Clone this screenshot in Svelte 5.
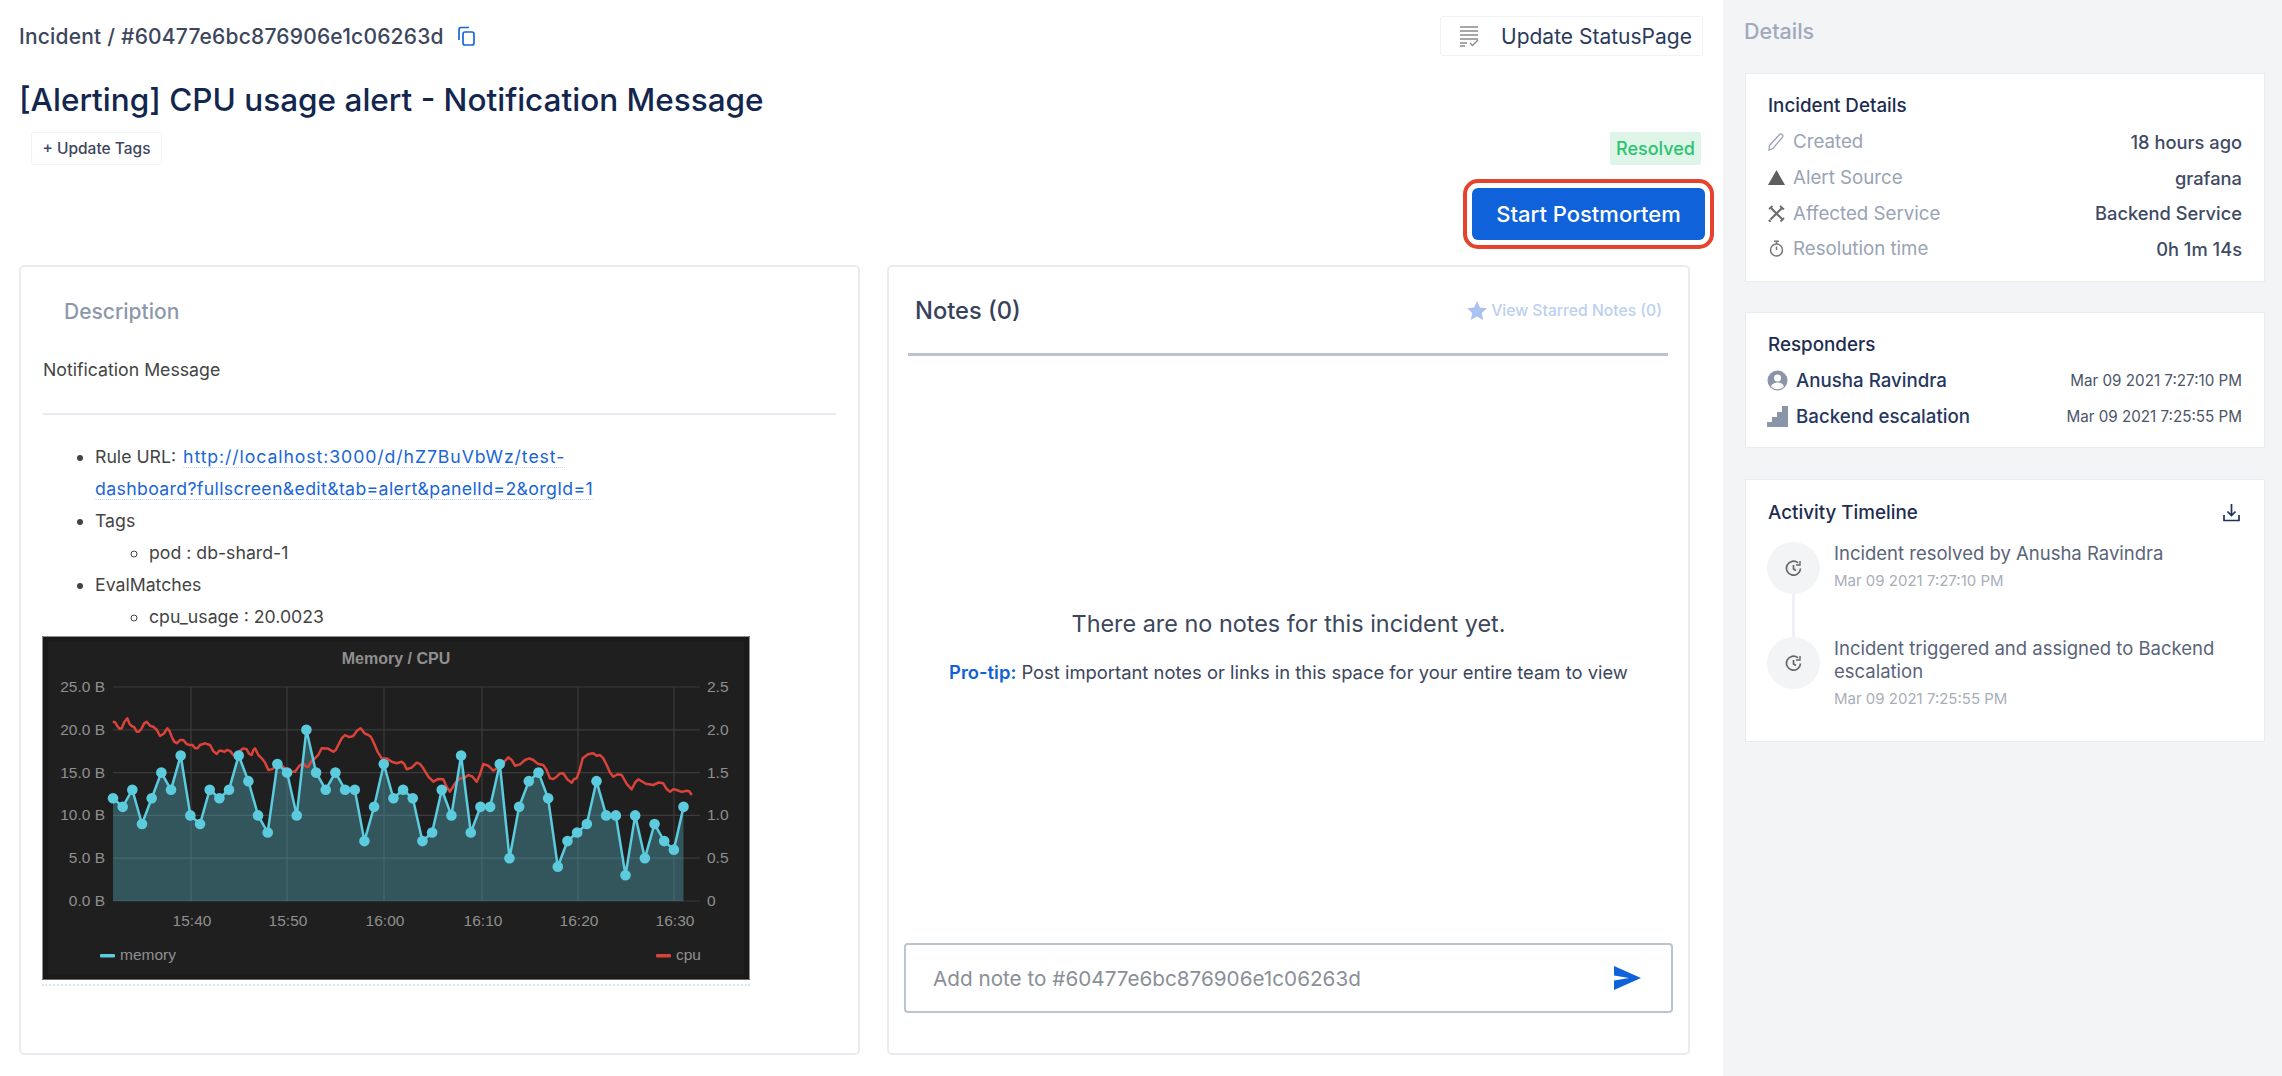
<script>
  const memory = [12,11,13,9,12,15,13,17,10,9,13,12,13,17,14,10,8,16,15,10,20,15,13,15,13,13,7,11,16,12,13,12,7,8,13,10,17,8,11,11,16,5,11,14,15,12,4,7,8,9,14,10,10,3,10,5,9,7,6,11]
  const y0 = 901
  const yStep = 8.56
  const pts = memory.map((v, i) => [113 + i * 9.67, y0 - v * yStep])
  const line = pts.map(p => p[0].toFixed(1) + ',' + p[1].toFixed(1)).join(' ')
  const area = `113,${y0} ${line} ${pts[59][0].toFixed(1)},${y0}`

  // red series read off the screenshot, in page pixels
  const cpuLeft = [[248,275],[262,288],[275,295],[292,265],[305,288],[320,305],[335,295],[350,275],[370,290],[390,318],[412,295],[425,320],[440,340],[460,330],[480,345],[495,355],[510,345],[540,345],[560,372],[575,362],[590,360],[610,375],[630,362],[650,358],[665,375],[675,355],[695,385],[715,420],[740,405],[765,415],[795,425],[820,400],[835,410],[855,385],[875,355],[910,365],[925,345],[945,315],[970,318],[992,295],[1015,315],[1030,335],[1055,385],[1085,395],[1115,395]]
  const cpuRight = [[20,418],[50,398],[70,415],[100,455],[130,448],[150,485],[180,445],[205,435],[230,455],[250,402],[280,422],[325,382],[345,407],[375,390],[400,390],[430,405],[450,445],[470,440],[490,430],[515,458],[530,445],[548,385],[580,370],[600,375],[620,405],[640,440],[665,435],[695,478],[715,448],[760,465],[790,460],[810,485],[830,480],[860,482],[875,495]]
  const cpuBase = [
    ...cpuLeft.map(p => [30 + p[0] / 3, 630 + p[1] / 3]),
    ...cpuRight.map(p => [400 + p[0] / 3, 630 + p[1] / 3])
  ]
  // small wobble between the read points, the real series is noisy
  const cpu = cpuBase.flatMap((p, i) => {
    const n = cpuBase[i + 1]
    if (!n) return [p]
    return [p, [(p[0] + n[0]) / 2, (p[1] + n[1]) / 2 + (i % 2 ? 1.6 : -1.6)]]
  }).map(p => p[0].toFixed(1) + ',' + p[1].toFixed(1)).join(' ')

  const leftAxis = ['25.0 B','20.0 B','15.0 B','10.0 B','5.0 B','0.0 B']
  const rightAxis = ['2.5','2.0','1.5','1.0','0.5','0']
  const ticks = [[191,'15:40'],[287,'15:50'],[384,'16:00'],[482,'16:10'],[578,'16:20'],[674,'16:30']]
  const hash = '#60477e6bc876906e1c06263d'
</script>

<div class="page">
  <main>
    <div class="topbar">
      <div class="crumb">
        <span>Incident / {hash}</span>
        <svg width="20" height="20" viewBox="0 0 20 20" fill="none" stroke="#1a66d6" stroke-width="1.7">
          <rect x="7" y="6" width="11" height="13" rx="2" />
          <path d="M3 14V3.5A2 2 0 0 1 5 1.500h8" />
        </svg>
      </div>
      <button class="status-btn">
        <svg width="19" height="21" viewBox="0 0 19 21" fill="none" stroke="#8b8b8b" stroke-width="1.7">
          <path d="M0 1h18M0 5h18M0 9h18M0 13h18M0 17h7M0 20h5" />
          <path d="M10 17l2.500 2.500L18 14" stroke-width="1.300" />
        </svg>
        Update StatusPage
      </button>
    </div>

    <h1>[Alerting] CPU usage alert - Notification Message</h1>

    <div class="tagrow">
      <button class="tags-btn">+ Update Tags</button>
      <span class="resolved">Resolved</span>
    </div>

    <div class="actionrow">
      <button class="postmortem">Start Postmortem</button>
    </div>

    <div class="columns">
      <section class="card desc">
        <h3>Description</h3>
        <p class="msg">Notification Message</p>
        <hr />
        <ul>
          <li>Rule URL: <a href="#rule">http://localhost:3000/d/hZ7BuVbWz/test-<span class="nb">dashboard?fullscreen&amp;edit&amp;tab=alert&amp;panelId=2&amp;orgId=1</span></a></li>
          <li>Tags
            <ul><li>pod : db-shard-1</li></ul>
          </li>
          <li>EvalMatches
            <ul><li>cpu_usage : 20.0023</li></ul>
          </li>
        </ul>
        <svg class="chart" width="708" height="344" viewBox="42 636 708 344">
          <rect x="42" y="636" width="708" height="344" fill="#191919" />
          <rect x="48" y="642" width="696" height="332" fill="#1f1f20" />
          <path d="M42.500 980V636.500H749.500V980" fill="none" stroke="#8e8e8e" />
          <path d="M42 979.500H750" stroke="#6a6a6a" />
          <text class="ctitle" x="396" y="664" text-anchor="middle">Memory / CPU</text>
          {#each leftAxis as label, i}
            <path d="M113 {687 + i * 42.8}H700" stroke="#3b3b3b" stroke-width="1.200" />
            <text class="axis" x="105" y={692 + i * 42.8} text-anchor="end">{label}</text>
            <text class="axis" x="707" y={692 + i * 42.8}>{rightAxis[i]}</text>
          {/each}
          {#each ticks as t}
            <path d="M{t[0]} 687V901" stroke="#3b3b3b" stroke-width="1.200" />
            <text class="axis" x={t[0] + 1} y="926" text-anchor="middle">{t[1]}</text>
          {/each}
          <polygon points={area} fill="#5bcbdd" fill-opacity="0.32" />
          <polyline points={cpu} fill="none" stroke="#d9433a" stroke-width="2.500" stroke-linejoin="round" />
          <polyline points={line} fill="none" stroke="#5bcbdd" stroke-width="2.500" />
          {#each pts as p}
            <circle cx={p[0]} cy={p[1]} r="5.300" fill="#5bcbdd" />
          {/each}
          <rect x="100" y="954" width="15" height="3.500" rx="1" fill="#5bcbdd" />
          <text class="axis" x="120" y="960">memory</text>
          <rect x="656" y="954" width="15" height="3.500" rx="1" fill="#d9433a" />
          <text class="axis" x="676" y="960">cpu</text>
        </svg>
        <div class="imgline"></div>
      </section>

      <section class="card notes">
        <div class="noteshead">
          <h2>Notes (0)</h2>
          <span class="starred">
            <svg width="20" height="19" viewBox="0 0 24 23"><path d="M12 0l3.600 7.800 8.400 1-6.200 5.800 1.700 8.400-7.500-4.200L4.500 23l1.700-8.400L0 8.800l8.400-1z" fill="#a9c3ee" /></svg>
            View Starred Notes (0)
          </span>
        </div>
        <div class="empty">
          <p class="big">There are no notes for this incident yet.</p>
          <p class="tip"><b>Pro-tip:</b> Post important notes or links in this space for your entire team to view</p>
        </div>
        <div class="noteinput">
          <input placeholder="Add note to {hash}" />
          <svg width="27" height="24" viewBox="0 0 27 24"><path d="M0 0l27 12L0 24v-9.500L15 12 0 9.500z" fill="#0f62d9" /></svg>
        </div>
      </section>
    </div>
  </main>

  <aside>
    <div class="detailshead">Details</div>

    <section class="box info">
      <h4>Incident Details</h4>
      <div class="row">
        <span class="lab">
          <svg width="17" height="18" viewBox="0 0 17 18" fill="none" stroke="#99a3b5" stroke-width="1.300"><path d="M1.500 12.500L11.500 1.500a2 2 0 0 1 3 2.600L5 15.500 1 17z" /></svg>
          Created
        </span>
        <span class="val">18 hours ago</span>
      </div>
      <div class="row">
        <span class="lab">
          <svg width="17" height="15" viewBox="0 0 17 15"><path d="M8.500 0L17 15H0z" fill="#5e5e5e" /></svg>
          Alert Source
        </span>
        <span class="val">grafana</span>
      </div>
      <div class="row">
        <span class="lab">
          <svg width="17" height="17" viewBox="0 0 17 17" fill="none" stroke="#6d6d6d" stroke-width="2.200"><path d="M2.500 14.500L14 3M3 3l11.500 11.500" /><path d="M12 1l4 3.500M1 4l3.500-3M.8 15l2 2M12.500 16.500l3.500-3.500" stroke-width="1.800" /></svg>
          Affected Service
        </span>
        <span class="val">Backend Service</span>
      </div>
      <div class="row">
        <span class="lab">
          <svg width="17" height="17" viewBox="0 0 17 17" fill="none" stroke="#777" stroke-width="1.500"><circle cx="8.500" cy="10" r="6" /><path d="M6 1.200h5M8.500 1.500v2.500M8.500 10V6.500" /></svg>
          Resolution time
        </span>
        <span class="val">0h 1m 14s</span>
      </div>
    </section>

    <section class="box responders">
      <h4>Responders</h4>
      <div class="row">
        <span class="who">
          <svg width="21" height="21" viewBox="0 0 21 21">
            <circle cx="10.500" cy="10.500" r="10" fill="#8b95a8" />
            <circle cx="10.500" cy="8" r="3.500" fill="#fff" />
            <path d="M4 16.500c1-3 4-4 6.500-4s5.500 1 6.500 4a9 9 0 0 1-13 0z" fill="#fff" />
          </svg>
          Anusha Ravindra
        </span>
        <span class="at">Mar 09 2021 7:27:10 PM</span>
      </div>
      <div class="row">
        <span class="who">
          <svg width="21" height="21" viewBox="0 0 21 21"><path d="M0 21v-5h5v-5h5V6h5V0h6v21z" fill="#8b95a8" /></svg>
          Backend escalation
        </span>
        <span class="at">Mar 09 2021 7:25:55 PM</span>
      </div>
    </section>

    <section class="box activity">
      <div class="acthead">
        <h4>Activity Timeline</h4>
        <svg width="17" height="18" viewBox="0 0 17 18" fill="none" stroke="#1f3158" stroke-width="1.700"><path d="M8.500 0v11M4.500 7.500l4 4 4-4M1 11v5.500h15V11" /></svg>
      </div>
      <div class="event">
        <div class="dot">
          <svg width="17" height="17" viewBox="0 0 17 17" fill="none" stroke="#666" stroke-width="1.700"><path d="M13 2.800A7 7 0 1 0 15.500 8.500M8.500 5v4l2.500 1.500" /><path d="M15 1v4h-4" stroke-width="1.400" /></svg>
        </div>
        <div class="etext">
          <div>Incident resolved by Anusha Ravindra</div>
          <small>Mar 09 2021 7:27:10 PM</small>
        </div>
      </div>
      <div class="connector"></div>
      <div class="event">
        <div class="dot">
          <svg width="17" height="17" viewBox="0 0 17 17" fill="none" stroke="#666" stroke-width="1.700"><path d="M13 2.800A7 7 0 1 0 15.500 8.500M8.500 5v4l2.500 1.500" /><path d="M15 1v4h-4" stroke-width="1.400" /></svg>
        </div>
        <div class="etext">
          <div>Incident triggered and assigned to Backend escalation</div>
          <small>Mar 09 2021 7:25:55 PM</small>
        </div>
      </div>
    </section>
  </aside>
</div>

<style>
  :global(body) {
    margin: 0;
    background: #fff;
    overflow: hidden;
  }
  .page {
    display: flex;
    width: 2282px;
    height: 1076px;
    font-family: Inter, "Liberation Sans", sans-serif;
    font-size: 15px;
    color: #444;
  }
  main {
    width: 1723px;
    box-sizing: border-box;
    padding: 16px 20px 0 19px;
  }
  .topbar {
    display: flex;
    justify-content: space-between;
    align-items: center;
    height: 40px;
  }
  .crumb {
    display: flex;
    align-items: center;
    gap: 12px;
    font-size: 21px;
    letter-spacing: 0.2px;
    font-weight: 500;
    color: #3c465c;
  }
  button {
    font-family: inherit;
    cursor: pointer;
  }
  .status-btn {
    display: flex;
    align-items: center;
    gap: 22px;
    width: 263px;
    height: 40px;
    padding: 0 0 0 19px;
    background: #fff;
    border: 1px solid #f1f2f5;
    border-radius: 3px;
    font-size: 21px;
    color: #2b3a5c;
    white-space: nowrap;
  }
  h1 {
    margin: 26px 0 0;
    height: 50px;
    line-height: 36px;
    font-size: 31.500px;
    font-weight: 500;
    color: #13264e;
    white-space: nowrap;
  }
  .tagrow {
    display: flex;
    justify-content: space-between;
    height: 33px;
    padding: 0 2px 0 12px;
  }
  .tags-btn {
    width: 131px;
    padding: 0;
    background: #fff;
    border: 1px solid #f1f2f5;
    border-radius: 3px;
    font-size: 15.500px;
    font-weight: 500;
    color: #3c465c;
  }
  .resolved {
    display: flex;
    align-items: center;
    justify-content: center;
    width: 91px;
    background: #dff5e8;
    border-radius: 2px;
    font-size: 18px;
    font-weight: 500;
    color: #2ac46f;
  }
  .actionrow {
    display: flex;
    justify-content: flex-end;
    margin: 23px -2px 0 0;
  }
  .postmortem {
    width: 233px;
    height: 52px;
    padding: 0;
    background: #0f62d9;
    border: none;
    border-radius: 6px;
    outline: 4px solid #e5432e;
    outline-offset: 5px;
    font-size: 22px;
    font-weight: 500;
    color: #fff;
  }
  .columns {
    display: grid;
    grid-template-columns: 841px 803px;
    gap: 27px;
    margin-top: 25px;
    height: 790px;
  }
  .card {
    box-sizing: border-box;
    border: 2px solid #e9ebf1;
    border-radius: 5px;
    background: #fff;
  }
  .desc {
    padding: 0 22px;
    overflow: hidden;
  }
  .desc h3 {
    margin: 33px 0 0 21px;
    line-height: 24px;
    font-size: 21px;
    font-weight: 500;
    color: #8d98ad;
  }
  .msg {
    margin: 34px 0 0;
    line-height: 24px;
    font-size: 17.700px;
    color: #444;
  }
  hr {
    margin: 31px 0 0;
    border: none;
    border-top: 2px solid #e8ecf2;
  }
  .desc ul {
    margin: 0;
    padding: 0 0 0 52px;
    line-height: 32px;
    font-size: 17.700px;
    color: #444;
  }
  .desc > ul {
    margin-top: 25.500px;
  }
  .desc ul ul {
    padding-left: 54px;
  }
  a {
    margin-left: 2px;
    color: #1a66d6;
    text-decoration: none;
    letter-spacing: 0.9px;
    border-bottom: 1px dotted #c9daf5;
  }
  .nb {
    white-space: nowrap;
    letter-spacing: 0.35px;
  }
  .chart {
    display: block;
    margin: 3px 0 0 -1px;
  }
  .chart text {
    font-family: "Liberation Sans", Arial, sans-serif;
  }
  .axis {
    font-size: 15.500px;
    fill: #8f8f8f;
  }
  .ctitle {
    font-size: 16px;
    font-weight: 700;
    fill: #8f8f8f;
  }
  .imgline {
    width: 708px;
    margin: 4px 0 0 -1px;
    border-top: 2px dotted #dbe6f8;
  }
  .notes {
    display: flex;
    flex-direction: column;
    padding: 0 15px 40px 15px;
  }
  .noteshead {
    display: flex;
    justify-content: space-between;
    align-items: center;
    height: 86px;
    margin: 0 5px 0 4px;
    padding: 0 6px 0 7px;
    border-bottom: 3px solid #bcc3d2;
  }
  .noteshead h2 {
    margin: 0;
    font-size: 23.700px;
    font-weight: 500;
    color: #37425a;
  }
  .starred {
    display: flex;
    align-items: center;
    gap: 4px;
    font-size: 15.700px;
    font-weight: 500;
    color: #bcd0f1;
  }
  .empty {
    flex: 1;
    display: flex;
    flex-direction: column;
    align-items: center;
    justify-content: center;
    gap: 24px;
    padding-bottom: 6px;
    color: #3c465c;
  }
  .empty p {
    margin: 0;
  }
  .big {
    font-size: 23.400px;
    line-height: 26px;
  }
  .tip {
    font-size: 18.400px;
    line-height: 22px;
  }
  .tip b {
    font-weight: 600;
    color: #0f62d9;
  }
  .noteinput {
    display: flex;
    align-items: center;
    height: 70px;
    box-sizing: border-box;
    padding: 0 30px 0 27px;
    border: 2px solid #bcc3d2;
    border-radius: 4px;
  }
  .noteinput input {
    flex: 1;
    border: none;
    outline: none;
    padding: 0;
    font-family: inherit;
    font-size: 20.700px;
  }
  .noteinput input::placeholder {
    color: #8a8f98;
  }
  aside {
    flex: 1;
    box-sizing: border-box;
    padding: 0 17px 0 22px;
    background: #f3f4f6;
  }
  .detailshead {
    height: 73px;
    line-height: 62px;
    font-size: 21.500px;
    font-weight: 500;
    color: #a0aabb;
    margin-left: -1px;
  }
  .box {
    box-sizing: border-box;
    padding: 0 22px;
    background: #fff;
    border: 1px solid #e9ebf1;
    margin-bottom: 30px;
  }
  .info { height: 209px; }
  .responders { height: 136px; margin-bottom: 31px; }
  .activity { height: 263px; }
  h4 {
    margin: 0;
    font-size: 18.800px;
    font-weight: 500;
    color: #1d2c50;
    line-height: 20px;
  }
  .info h4, .responders h4 {
    padding-top: 22px;
    margin-bottom: 8px;
  }
  .row {
    display: flex;
    justify-content: space-between;
    align-items: center;
    height: 35.700px;
  }
  .lab, .who {
    display: flex;
    align-items: center;
    gap: 8px;
    font-size: 18.700px;
    color: #99a3b5;
  }
  .val {
    font-size: 18.300px;
    font-weight: 500;
    color: #3f4a63;
  }
  .who {
    font-weight: 500;
    color: #25375f;
    margin-left: -1px;
  }
  .at {
    font-size: 15.200px;
    color: #4b5568;
  }
  .acthead {
    display: flex;
    justify-content: space-between;
    align-items: center;
    height: 66px;
    padding-right: 2px;
  }
  .event {
    display: flex;
    gap: 14px;
    margin-top: -4px;
  }
  .connector + .event { margin-top: 0; }
  .dot {
    flex: none;
    display: flex;
    align-items: center;
    justify-content: center;
    width: 53px;
    height: 52px;
    margin-left: -1px;
    border-radius: 50%;
    background: #f3f4f6;
  }
  .connector {
    width: 3px;
    height: 43px;
    margin-left: 24px;
    background: #f0f1f4;
  }
  .etext {
    font-size: 18.500px;
    line-height: 23px;
    color: #5a6478;
  }
  .etext small {
    display: block;
    margin-top: 4px;
    font-size: 15px;
    color: #a9aeb8;
  }
</style>
